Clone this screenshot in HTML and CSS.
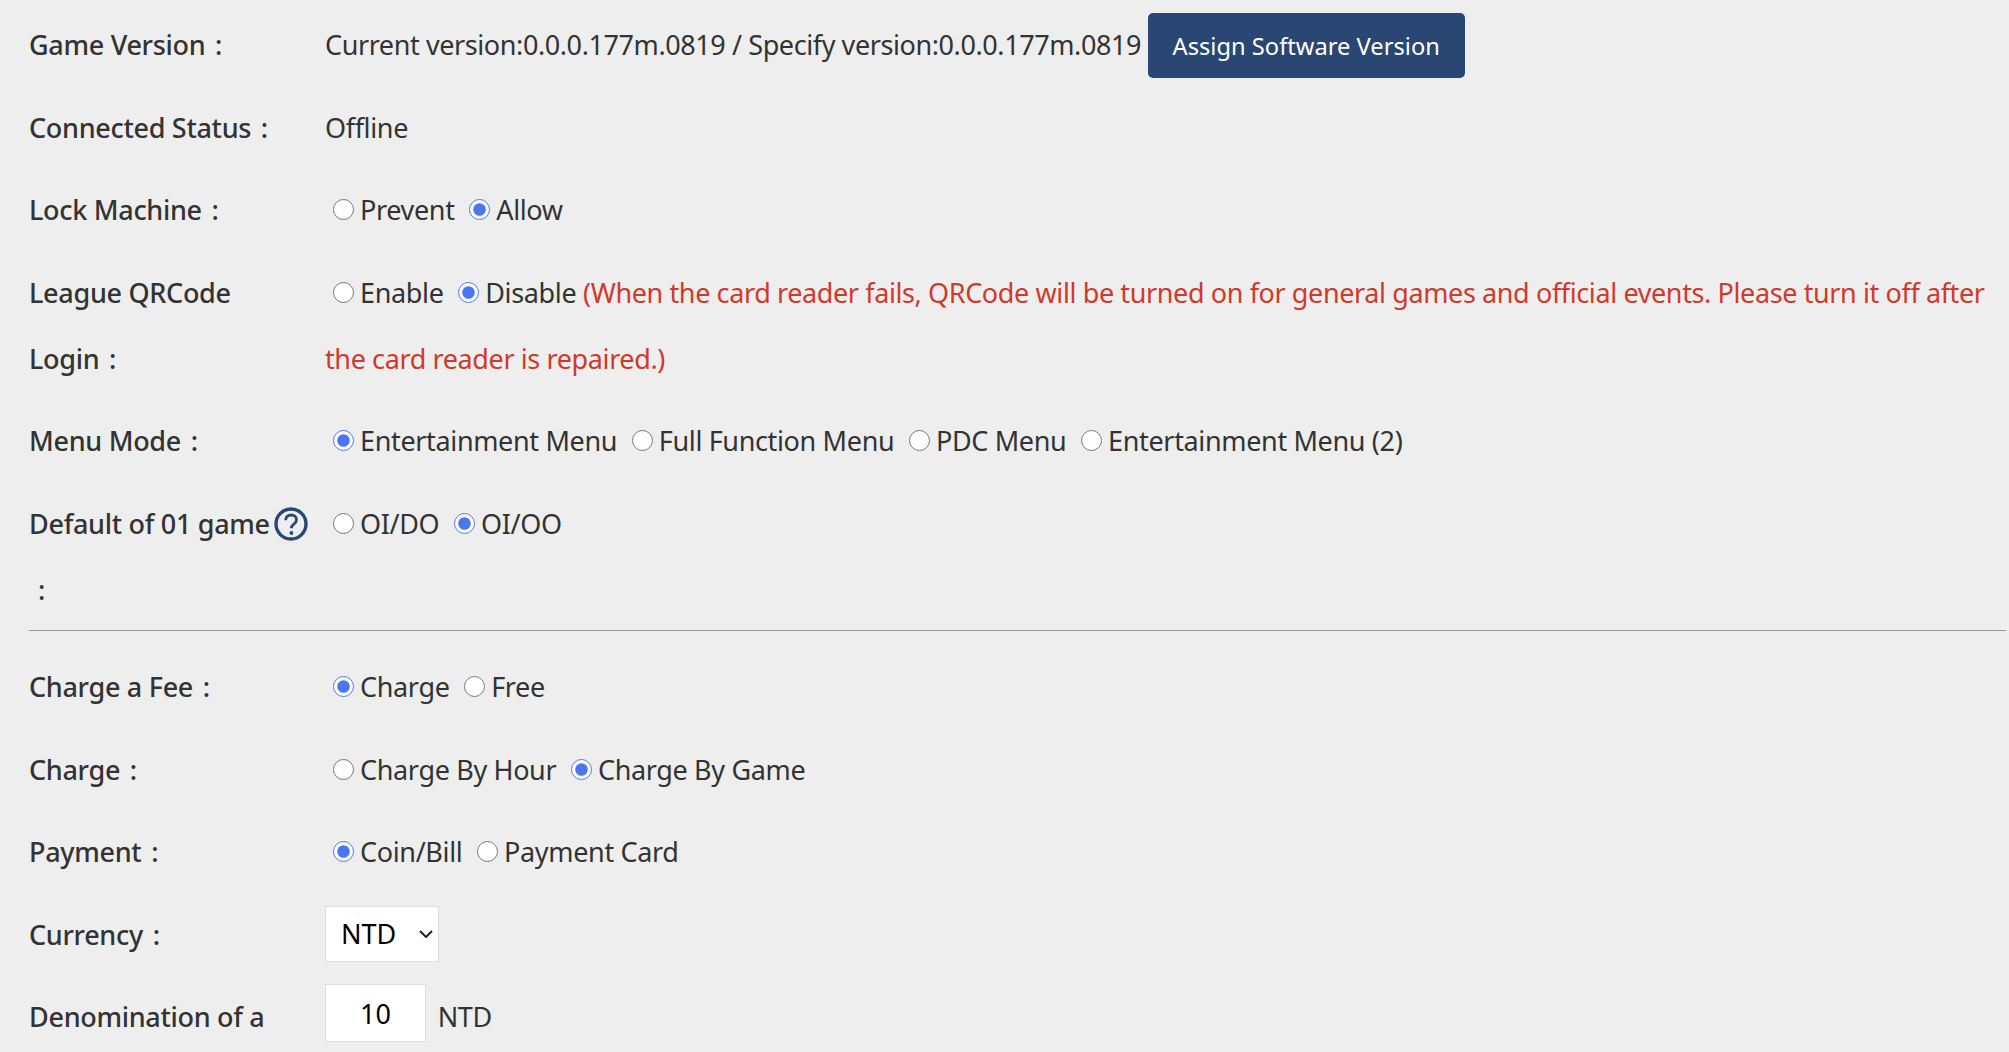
FILE: index.html
```html
<!DOCTYPE html>
<html>
<head>
  <title>Machine Settings</title>
  <link rel="stylesheet" href="styles.css">
</head>
<body>
  <div class="settings">
    <div class="row">
      <div class="label">Game Version <span class="colon">:</span></div>
      <div class="value">
        <span class="version">Current version:0.0.0.177m.0819 / Specify version:0.0.0.177m.0819</span>
        <button class="assign-button">Assign Software Version</button>
      </div>
    </div>
    <div class="row">
      <div class="label">Connected Status <span class="colon">:</span></div>
      <div class="value">Offline</div>
    </div>
    <div class="row">
      <div class="label">Lock Machine <span class="colon">:</span></div>
      <div class="value">
        <label class="option"><input type="radio" name="lock">Prevent</label>
        <label class="option"><input type="radio" name="lock" checked>Allow</label>
      </div>
    </div>
    <div class="row">
      <div class="label">League QRCode<br>Login <span class="colon">:</span></div>
      <div class="value">
        <label class="option"><input type="radio" name="qrcode">Enable</label>
        <label class="option"><input type="radio" name="qrcode" checked>Disable</label>
        <span class="warning">(When the card reader fails, QRCode will be turned on for general games and official events. Please turn it off after the card reader is repaired.)</span>
      </div>
    </div>
    <div class="row">
      <div class="label">Menu Mode <span class="colon">:</span></div>
      <div class="value">
        <label class="option"><input type="radio" name="menu" checked>Entertainment Menu</label>
        <label class="option"><input type="radio" name="menu">Full Function Menu</label>
        <label class="option"><input type="radio" name="menu">PDC Menu</label>
        <label class="option"><input type="radio" name="menu">Entertainment Menu (2)</label>
      </div>
    </div>
    <div class="row">
      <div class="label">Default of 01 game<svg class="help-icon" viewBox="0 0 34 34" aria-hidden="true"><circle cx="17" cy="17" r="15" fill="none" stroke="#2a4773" stroke-width="3.4"/><path d="M11.6 13.2c0-3.2 2.4-5.2 5.5-5.2s5.4 1.9 5.4 4.7c0 2.3-1.3 3.4-2.9 4.6-1.5 1.1-2.2 2-2.2 4" fill="none" stroke="#2a4773" stroke-width="2.8"/><circle cx="17.4" cy="26" r="1.9" fill="#2a4773"/></svg> <span class="colon wrapped">:</span></div>
      <div class="value">
        <label class="option"><input type="radio" name="game01">OI/DO</label>
        <label class="option"><input type="radio" name="game01" checked>OI/OO</label>
      </div>
    </div>

    <hr class="divider">

    <div class="row">
      <div class="label">Charge a Fee <span class="colon">:</span></div>
      <div class="value">
        <label class="option"><input type="radio" name="fee" checked>Charge</label>
        <label class="option"><input type="radio" name="fee">Free</label>
      </div>
    </div>
    <div class="row">
      <div class="label">Charge <span class="colon">:</span></div>
      <div class="value">
        <label class="option"><input type="radio" name="chargeBy">Charge By Hour</label>
        <label class="option"><input type="radio" name="chargeBy" checked>Charge By Game</label>
      </div>
    </div>
    <div class="row">
      <div class="label">Payment <span class="colon">:</span></div>
      <div class="value">
        <label class="option"><input type="radio" name="payment" checked>Coin/Bill</label>
        <label class="option"><input type="radio" name="payment">Payment Card</label>
      </div>
    </div>
    <div class="row">
      <div class="label">Currency <span class="colon">:</span></div>
      <div class="value">
        <select class="currency-select"><option>NTD</option></select>
      </div>
    </div>
    <div class="row">
      <div class="label">Denomination of a</div>
      <div class="value">
        <input class="amount-input" type="text" value="10">
        <span class="unit">NTD</span>
      </div>
    </div>
  </div>
</body>
</html>
```

FILE: styles.css
```css
html, body {
  margin: 0;
  overflow: hidden;
}
body {
  background-color: #eeeeee;
  color: #333333;
  font-family: "Noto Sans", "Noto Sans CJK TC", sans-serif;
  font-size: 27px;
  line-height: 66px;
  letter-spacing: -0.35px;
}
.settings {
  padding: 12px 3px 0 29px;
}
.row {
  display: flex;
}
.row + .row {
  margin-top: 16.6px;
}
.label {
  flex: 0 0 281px;
  margin-right: 15px;
  font-weight: 500;
  letter-spacing: -0.3px;
}
.colon {
  margin-left: 3px;
}
.colon.wrapped {
  margin-left: 9px;
}
.value {
  flex: 1;
}
.version {
  letter-spacing: -0.41px;
}
.help-icon {
  width: 34px;
  height: 34px;
  margin-left: 4px;
  vertical-align: -7px;
}
.option input {
  width: 21px;
  height: 21px;
  margin: 0 6px 0 8px;
  accent-color: #4a76f0;
  vertical-align: 0;
}
.warning {
  color: #d0392b;
  letter-spacing: -0.39px;
}
.assign-button {
  width: 317px;
  height: 65px;
  margin-top: 1px;
  border: none;
  border-radius: 5px;
  background-color: #2a4773;
  color: #ffffff;
  font: inherit;
  font-size: 23.7px;
  line-height: normal;
  vertical-align: top;
  cursor: pointer;
}
.divider {
  height: 1px;
  margin: 7px 0 23px;
  border: none;
  background-color: #999999;
}
.currency-select {
  appearance: none;
  width: 114px;
  height: 56px;
  margin-top: 4px;
  padding-left: 15px;
  border: 1px solid #dddddd;
  border-radius: 0;
  background: #ffffff url("data:image/svg+xml,%3Csvg xmlns='http://www.w3.org/2000/svg' width='14' height='8'%3E%3Cpath d='M1 1l6 6 6-6' fill='none' stroke='%23222' stroke-width='2'/%3E%3C/svg%3E") no-repeat 93px 23px;
  color: #000000;
  font: inherit;
  line-height: normal;
  vertical-align: top;
}
.amount-input {
  width: 101px;
  height: 58px;
  box-sizing: border-box;
  border: 1px solid #dddddd;
  background-color: #ffffff;
  color: #000000;
  font: inherit;
  line-height: normal;
  text-align: center;
  vertical-align: top;
}
.unit {
  margin-left: 5px;
}
```
